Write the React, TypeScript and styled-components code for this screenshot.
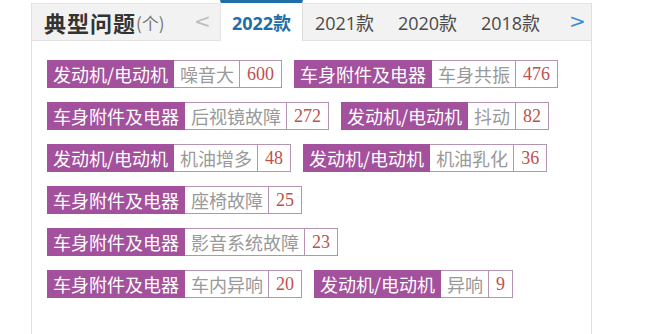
import React from "react";
import styled, { createGlobalStyle } from "styled-components";

const GlobalStyle = createGlobalStyle`
  html, body {
    margin: 0;
    padding: 0;
    background: #ffffff;
  }
  * {
    box-sizing: border-box;
  }
`;

const Panel = styled.div`
  margin: 3px 0 0 31px;
  width: 561px;
  min-height: 331px;
  border-left: 1px solid #dbe3ec;
  border-right: 1px solid #e0e0e0;
  font-family: "Open Sans", "Noto Sans CJK SC", sans-serif;
`;

const Header = styled.div`
  display: flex;
  align-items: stretch;
  height: 38px;
  background: #f2f2f2;
  border-top: 1px solid #e6e6e6;
  border-bottom: 1px solid #e2e2e2;
`;

const TitleBox = styled.div`
  flex: 0 0 153px;
  display: flex;
  align-items: center;
  padding-left: 12px;
  white-space: nowrap;
`;

const Title = styled.span`
  font-family: "Noto Sans CJK SC", sans-serif;
  font-size: 22px;
  font-weight: 700;
  color: #333333;
  letter-spacing: 1px;
`;

const Unit = styled.span`
  font-family: "Noto Sans CJK SC", sans-serif;
  font-size: 17px;
  color: #777777;
`;

const Arrow = styled.div<{ $active?: boolean; $width: number; $shift?: number }>`
  flex: 0 0 ${(p) => p.$width}px;
  display: flex;
  align-items: center;
  justify-content: center;
  padding-left: ${(p) => p.$shift ?? 0}px;
  padding-bottom: 2px;
  font-family: "DejaVu Sans", sans-serif;
  font-size: 20px;
  color: ${(p) => (p.$active ? "#3a8fd3" : "#bcbcbc")};
  cursor: pointer;
`;

const Tab = styled.div<{ $active?: boolean }>`
  flex: 0 0 83px;
  display: flex;
  align-items: center;
  justify-content: center;
  font-size: 18px;
  white-space: nowrap;
  color: #4a4a4a;
  cursor: pointer;

  ${(p) =>
    p.$active &&
    `
    margin: -4px 0 -1px;
    background: #ffffff;
    border-top: 3px solid #1f6ea8;
    border-left: 1px solid #e6e6e6;
    border-right: 1px solid #dddddd;
    color: #1f6ea8;
    font-weight: 700;
  `}
`;

const Body = styled.div`
  display: flex;
  flex-wrap: wrap;
  gap: 14px 12px;
  padding: 19px 15px 20px 15px;
`;

const TagItem = styled.div`
  display: flex;
  height: 28px;
  font-size: 18px;
  white-space: nowrap;
`;

const Category = styled.span`
  display: flex;
  align-items: center;
  padding: 0 6px;
  background: #a4519d;
  color: #ffffff;
  font-family: "Noto Sans CJK SC", sans-serif;
`;

const Problem = styled.span`
  display: flex;
  align-items: center;
  padding: 0 5px 0 6px;
  border: 1px solid #b593b2;
  border-left: none;
  color: #999999;
  font-family: "Noto Sans CJK SC", sans-serif;
`;

const Count = styled.span`
  display: flex;
  align-items: center;
  padding: 0 7px 0 7px;
  border: 1px solid #b593b2;
  border-left: none;
  color: #c0504d;
  font-family: "Liberation Serif", serif;
  font-size: 18px;
`;

const problems = [
  { category: "发动机/电动机", name: "噪音大", count: 600 },
  { category: "车身附件及电器", name: "车身共振", count: 476 },
  { category: "车身附件及电器", name: "后视镜故障", count: 272 },
  { category: "发动机/电动机", name: "抖动", count: 82 },
  { category: "发动机/电动机", name: "机油增多", count: 48 },
  { category: "发动机/电动机", name: "机油乳化", count: 36 },
  { category: "车身附件及电器", name: "座椅故障", count: 25 },
  { category: "车身附件及电器", name: "影音系统故障", count: 23 },
  { category: "车身附件及电器", name: "车内异响", count: 20 },
  { category: "发动机/电动机", name: "异响", count: 9 },
];

const years = ["2022款", "2021款", "2020款", "2018款"];

export default function App() {
  return (
    <>
      <GlobalStyle />
      <Panel>
        <Header>
          <TitleBox>
            <Title>典型问题</Title>
            <Unit>(个)</Unit>
          </TitleBox>
          <Arrow $width={35}>&lt;</Arrow>
          {years.map((y, i) => (
            <Tab key={y} $active={i === 0}>
              {y}
            </Tab>
          ))}
          <Arrow $width={39} $shift={12} $active>
            &gt;
          </Arrow>
        </Header>
        <Body>
          {problems.map((p) => (
            <TagItem key={p.name}>
              <Category>{p.category}</Category>
              <Problem>{p.name}</Problem>
              <Count>{p.count}</Count>
            </TagItem>
          ))}
        </Body>
      </Panel>
    </>
  );
}
